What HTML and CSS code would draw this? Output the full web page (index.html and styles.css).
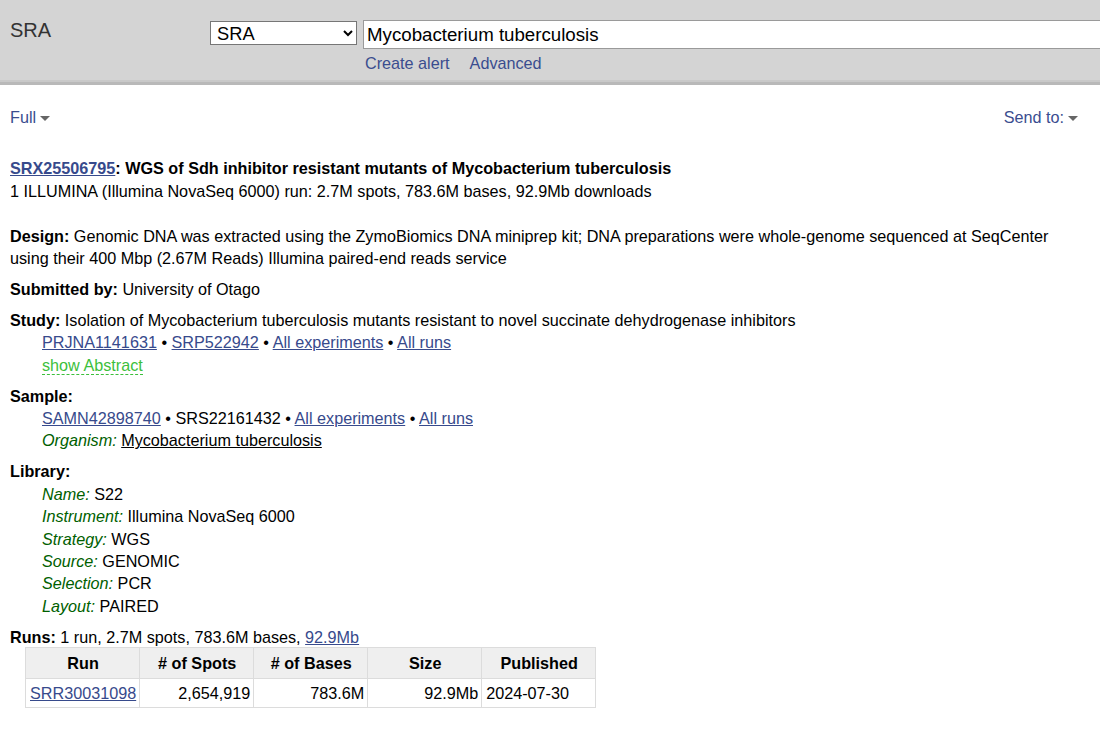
FILE: index.html
```html
<!DOCTYPE html>
<html>
<head>
<meta charset="utf-8">
<link rel="stylesheet" href="styles.css">
</head>
<body>
<header class="topbar">
  <div class="brand">SRA</div>
  <div class="search">
    <div class="search-row">
      <select class="db-select"><option>SRA</option></select>
      <input class="query" type="text" value="Mycobacterium tuberculosis">
    </div>
    <div class="search-links">
      <a href="#">Create alert</a>
      <a href="#">Advanced</a>
    </div>
  </div>
</header>

<main class="content">
  <div class="toolbar">
    <a class="menu" href="#">Full<span class="caret"></span></a>
    <a class="menu" href="#">Send to:<span class="caret"></span></a>
  </div>

  <div class="title-block">
    <div class="title"><a href="#">SRX25506795</a>: WGS of Sdh inhibitor resistant mutants of Mycobacterium tuberculosis</div>
    <div>1 ILLUMINA (Illumina NovaSeq 6000) run: 2.7M spots, 783.6M bases, 92.9Mb downloads</div>
  </div>

  <div class="block"><b>Design:</b> Genomic DNA was extracted using the ZymoBiomics DNA miniprep kit; DNA preparations were whole-genome sequenced at SeqCenter using their 400 Mbp (2.67M Reads) Illumina paired-end reads service</div>

  <div class="block"><b>Submitted by:</b> University of Otago</div>

  <div class="block">
    <div><b>Study:</b> Isolation of Mycobacterium tuberculosis mutants resistant to novel succinate dehydrogenase inhibitors</div>
    <div class="indent"><a href="#">PRJNA1141631</a> • <a href="#">SRP522942</a> • <a href="#">All experiments</a> • <a href="#">All runs</a></div>
    <div class="indent"><a class="toggle" href="#">show Abstract</a></div>
  </div>

  <div class="block">
    <div><b>Sample:</b></div>
    <div class="indent"><a href="#">SAMN42898740</a> • SRS22161432 • <a href="#">All experiments</a> • <a href="#">All runs</a></div>
    <div class="indent"><span class="lbl">Organism:</span> <a class="org" href="#">Mycobacterium tuberculosis</a></div>
  </div>

  <div class="block">
    <div><b>Library:</b></div>
    <div class="indent"><span class="lbl">Name:</span> S22</div>
    <div class="indent"><span class="lbl">Instrument:</span> Illumina NovaSeq 6000</div>
    <div class="indent"><span class="lbl">Strategy:</span> WGS</div>
    <div class="indent"><span class="lbl">Source:</span> GENOMIC</div>
    <div class="indent"><span class="lbl">Selection:</span> PCR</div>
    <div class="indent"><span class="lbl">Layout:</span> PAIRED</div>
  </div>

  <div class="runs">
    <div><b>Runs:</b> 1 run, 2.7M spots, 783.6M bases, <a href="#">92.9Mb</a></div>
    <table class="run-table">
      <thead>
        <tr><th>Run</th><th># of Spots</th><th># of Bases</th><th>Size</th><th>Published</th></tr>
      </thead>
      <tbody>
        <tr><td><a href="#">SRR30031098</a></td><td class="num">2,654,919</td><td class="num">783.6M</td><td class="num">92.9Mb</td><td>2024-07-30</td></tr>
      </tbody>
    </table>
  </div>
</main>
</body>
</html>
```

FILE: styles.css
```css
html, body {
  margin: 0;
  padding: 0;
  background: #fff;
}
body {
  font-family: "Liberation Sans", Arial, sans-serif;
  font-size: 16.2px;
  line-height: 22.4px;
  color: #000;
  overflow: hidden;
}
a {
  color: #374a8c;
}

/* header */
.topbar {
  display: flex;
  height: 82px;
  background: #d4d4d4;
  border-bottom: 3px solid #b9b9b9;
  box-shadow: inset 0 -2px 0 #c9c9c9;
  overflow: hidden;
}
.brand {
  flex: 0 0 200px;
  padding: 16px 0 0 10px;
  font-size: 20px;
  line-height: 28px;
  color: #333;
}
.search {
  display: flex;
  flex-direction: column;
  padding-top: 20px;
  flex-shrink: 0;
}
.search-row {
  display: flex;
  align-items: flex-start;
  gap: 6px;
}
.db-select {
  width: 147px;
  height: 24px;
  margin-top: 1px;
  font-family: "Liberation Sans", Arial, sans-serif;
  font-size: 18.3px;
  border: 1px solid #767676;
  border-radius: 0;
  background: #fff;
  color: #000;
  padding: 0 0 0 2px;
}
.query {
  width: 800px;
  height: 29px;
  box-sizing: border-box;
  border: 1px solid #9a9a9a;
  border-radius: 0;
  padding: 0 3px;
  font-family: "Liberation Sans", Arial, sans-serif;
  font-size: 18.7px;
  color: #000;
  background: #fff;
}
.search-links {
  display: flex;
  gap: 20px;
  padding: 3px 0 0 155px;
  line-height: 22px;
}
.search-links a {
  text-decoration: none;
  color: #3a4d8f;
}

/* content */
.content {
  padding: 21px 22px 0 10px;
}
.toolbar {
  display: flex;
  justify-content: space-between;
  margin-bottom: 29px;
}
.menu {
  text-decoration: none;
  color: #3a4d8f;
  display: inline-flex;
  align-items: center;
}
.caret {
  display: inline-block;
  width: 0;
  height: 0;
  margin-left: 4px;
  margin-top: 2px;
  border-left: 5px solid transparent;
  border-right: 5px solid transparent;
  border-top: 5px solid #666;
}
.title-block {
  margin-bottom: 22.5px;
}
.title {
  font-weight: bold;
}
.block {
  margin-bottom: 8.5px;
}
.indent {
  padding-left: 32px;
}
.toggle {
  color: #3cbf3c;
  text-decoration: none;
  border-bottom: 1px dashed #3cbf3c;
}
.lbl {
  font-style: italic;
  color: #006000;
}
a.org {
  color: #000;
}

.run-table {
  margin: -1px 0 0 15px;
  border-collapse: collapse;
}
.run-table th,
.run-table td {
  border: 1px solid #dcdcdc;
  width: 114px;
  box-sizing: border-box;
  padding: 3px 3px 3px 4px;
  white-space: nowrap;
}
.run-table th {
  background: #efefef;
  text-align: center;
  padding-top: 4px;
  padding-bottom: 3px;
}
.run-table td {
  text-align: left;
}
.run-table td.num {
  text-align: right;
}
```
